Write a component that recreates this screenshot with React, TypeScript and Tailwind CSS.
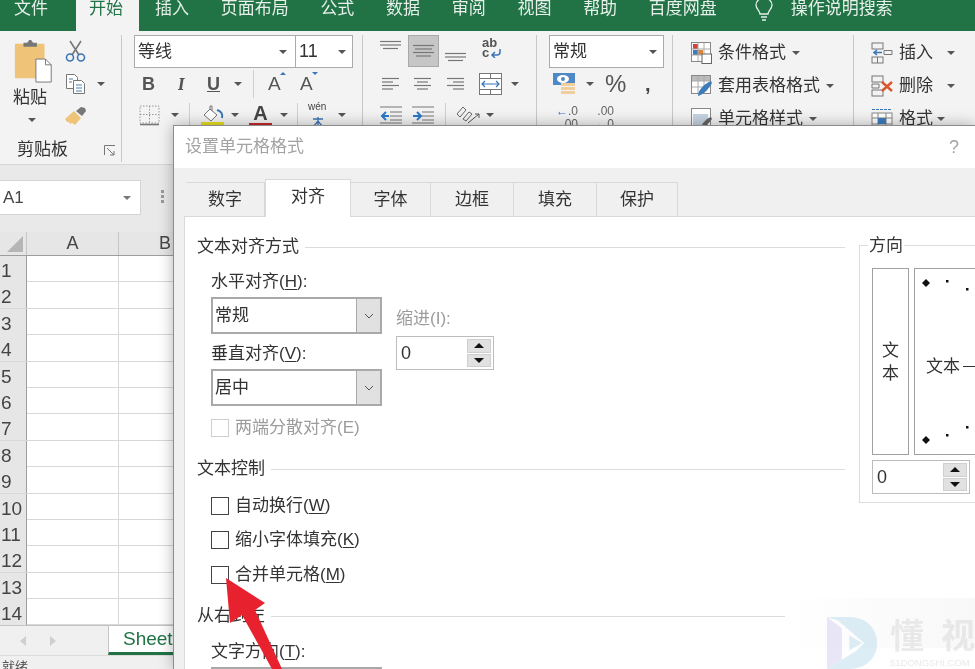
import React from 'react';

const cjk = "font-['Liberation_Sans','Noto_Sans_CJK_SC',sans-serif]";

const Caret = ({ className = '' }: { className?: string }) => (
  <span className={`inline-block w-0 h-0 border-x-[4px] border-x-transparent border-t-[4px] border-t-[#555] ${className}`} />
);

const Sep = ({ className = 'h-[24px]' }: { className?: string }) => <span className={`w-px bg-[#d0d0d0] ${className}`} />;

const Lines = ({ w, rows, gap = 3.5 }: { w: number; rows: [number, number][]; gap?: number }) => (
  <svg width={w} height="14" viewBox={`0 0 ${w} 14`}>
    {rows.map(([a, b], i) => (
      <line key={i} x1={a} x2={b} y1={1.5 + i * gap} y2={1.5 + i * gap} stroke="#777" strokeWidth="1.2" />
    ))}
  </svg>
);

const PasteIcon = () => (
  <svg width="40" height="44" viewBox="0 0 40 46">
    <rect x="0" y="5" width="31" height="36" rx="1" fill="#efc478" />
    <path d="M9 8V4h4l2-3h2l2 3h4v4z" fill="#777" />
    <path d="M22 21h10l6 6v18H22z" fill="#fff" stroke="#777" />
    <path d="M32 21v6h6" fill="none" stroke="#777" />
  </svg>
);

const ScissorsIcon = () => (
  <svg width="21" height="22" viewBox="0 0 21 22" fill="none">
    <path d="M5 1l9 14M16 1L7 15" stroke="#777" strokeWidth="1.6" />
    <circle cx="5" cy="17.5" r="3.5" stroke="#3a76b5" strokeWidth="1.6" />
    <circle cx="16" cy="17.5" r="3.5" stroke="#3a76b5" strokeWidth="1.6" />
  </svg>
);

const CopyIcon = () => (
  <svg width="21" height="22" viewBox="0 0 21 22" fill="#fff" stroke="#777">
    <path d="M1.5 1.5h8l3 3v11h-11z" />
    <path d="M8.5 7.5h8l3 3v10h-11z" />
    <path d="M11 12h6M11 15h6M11 18h6M4 6h4M4 9h3" stroke="#4c7fb3" />
  </svg>
);

const BrushIcon = () => (
  <svg width="22" height="20" viewBox="0 0 22 20">
    <path d="M0 13l9-8 7 7-6 7-3-2-2 1-1-2-2 0z" fill="#efc478" />
    <path d="M11 5l5-4 4 1 1 3-4 5z" fill="#777" />
  </svg>
);

const BorderIcon = () => (
  <svg width="21" height="21" viewBox="0 0 21 21" fill="none">
    <rect x="1" y="1" width="19" height="17" stroke="#999" strokeDasharray="1.5 1.5" />
    <path d="M10.5 1v17M1 9.5h19" stroke="#999" strokeDasharray="1.5 1.5" />
    <path d="M1 19.5h19" stroke="#777" strokeWidth="1.6" />
  </svg>
);

const FillIcon = () => (
  <svg width="24" height="22" viewBox="0 0 24 22" fill="none">
    <path d="M9 5l7 6-6 6-7-6z" fill="#fff" stroke="#777" />
    <path d="M9 6V2h2v5" stroke="#777" />
    <path d="M16 6c4 1 6 4 5 8" stroke="#3a76b5" strokeWidth="2" />
    <rect x="0" y="18" width="23" height="3" fill="#e8e020" />
  </svg>
);

const WenIcon = () => (
  <svg width="20" height="22" viewBox="0 0 20 22" fill="none">
    <path d="M10 13v9M5 15h10M6 22l4-5 4 5" stroke="#3a76b5" strokeWidth="1.3" />
  </svg>
);

const AlignTop = ({ active }: { active?: boolean }) => (
  <span className={`w-[31px] h-[32px] flex items-center justify-center ${active ? 'bg-[#c6c6c6] border border-[#a8a8a8]' : ''}`}>
    <Lines w={21} rows={active ? [[0, 21], [2, 19], [0, 21], [3, 18]] : [[0, 21], [0, 21], [3, 18]]} />
  </span>
);

const ReturnArrow = () => (
  <svg width="12" height="9" viewBox="0 0 12 9" fill="none">
    <path d="M10 0v3c0 2-1 3-3 3H2M5 3L2 6l3 3" stroke="#3a76b5" strokeWidth="1.5" />
  </svg>
);

const MergeIcon = () => (
  <svg width="23" height="22" viewBox="0 0 23 22" fill="none" stroke="#777">
    <rect x=".5" y=".5" width="22" height="21" fill="#fff" />
    <path d="M1 5.500h21M1 16.500h21M11.500 1v4.500M11.500 16.500V21" />
    <path d="M3 11h17M6 8l-3 3 3 3M17 8l3 3-3 3" stroke="#3a76b5" strokeWidth="1.2" />
  </svg>
);

const IndentIcon = ({ flip }: { flip?: boolean }) => (
  <svg width="22" height="18" viewBox="0 0 22 18" fill="none">
    <path d="M0 1h22M10 6h12M10 10h12M10 14h12M0 17h22" stroke="#777" />
    <path d={flip ? 'M1 10h7M5 6l4 4-4 4' : 'M9 10H2M6 6l-4 4 4 4'} stroke="#2a78c8" strokeWidth="2" />
  </svg>
);

const OrientIcon = () => (
  <svg width="24" height="18" viewBox="0 0 24 18" fill="none" stroke="#666">
    <path d="M1 8l6-7 3 3-6 7zM7 13l6-7 3 2-6 7z" />
    <path d="M12 17l11-9M23 8h-4M23 8v4" stroke="#555" />
  </svg>
);

const MoneyIcon = () => (
  <svg width="24" height="24" viewBox="0 0 24 24">
    <rect x="0" y="1" width="22" height="12" fill="#4f88c6" />
    <ellipse cx="10" cy="7" rx="6" ry="4" fill="#fff" />
    <circle cx="10" cy="7" r="2" fill="#4f88c6" />
    <rect x="8" y="11" width="14" height="3" fill="#f0cf9c" />
    <rect x="8" y="15" width="14" height="3" fill="#f0cf9c" />
    <rect x="8" y="19" width="14" height="3" fill="#f0cf9c" />
  </svg>
);

const CondIcon = () => (
  <svg width="21" height="22" viewBox="0 0 21 22">
    <rect x=".5" y=".5" width="19" height="19" fill="#fff" stroke="#888" />
    <rect x="2" y="2" width="5" height="5" fill="#d0453a" />
    <rect x="2" y="8" width="5" height="5" fill="#3d7cbc" />
    <rect x="7" y="8" width="5" height="5" fill="#d9863a" />
    <path d="M7 1v18M13 1v18M1 7h18M1 13h18" stroke="#aaa" />
    <rect x="11" y="12" width="9.500" height="9.500" fill="#fff" stroke="#666" />
  </svg>
);

const TableIcon = () => (
  <svg width="21" height="22" viewBox="0 0 21 22">
    <rect x=".5" y=".5" width="19" height="18" fill="#fff" stroke="#888" />
    <rect x="1" y="1" width="18" height="5" fill="#bbb" />
    <path d="M7 1v17M13 1v17M1 6h18M1 12h18" stroke="#aaa" />
    <path d="M7 21c0-6 6-12 13-15l1 2c-3 5-7 11-14 13z" fill="#3d7cbc" />
  </svg>
);

const CellStyleIcon = () => (
  <svg width="21" height="22" viewBox="0 0 21 22">
    <rect x=".5" y=".5" width="19" height="18" fill="#fff" stroke="#888" />
    <rect x="2" y="6" width="15" height="11" fill="#c6d3e2" />
    <path d="M10 20c1-5 5-9 10-11l1 2c-3 4-6 8-11 9z" fill="#666" />
  </svg>
);

const InsertIcon = () => (
  <svg width="22" height="22" viewBox="0 0 22 22" fill="none" stroke="#777">
    <rect x="1" y="1" width="11" height="6" />
    <rect x="1" y="15" width="11" height="6" />
    <path d="M6.500 15v6M13 8.500h8v4h-8z" />
    <path d="M11 10.500H3M6 8l-3 2.500L6 13" stroke="#3a76b5" strokeWidth="1.6" />
  </svg>
);

const DeleteIcon = () => (
  <svg width="22" height="22" viewBox="0 0 22 22" fill="none" stroke="#777">
    <rect x="1" y="1" width="11" height="6" />
    <rect x="1" y="15" width="11" height="6" />
    <path d="M1 9h7v4H1z" />
    <path d="M11 7l10 9M21 7L11 16" stroke="#d9562f" strokeWidth="2.4" />
  </svg>
);

const FormatIcon = () => (
  <svg width="22" height="22" viewBox="0 0 22 22" fill="none" stroke="#888">
    <rect x="1" y="5" width="20" height="16" fill="#fff" />
    <path d="M7 5v16M15 5v16M1 10h20M1 16h20" />
    <rect x="7" y="10" width="8" height="6" fill="#3d7cbc" stroke="none" />
    <path d="M1 1.500h20" stroke="#3a76b5" strokeDasharray="3 1" />
  </svg>
);

const BulbIcon = () => (
  <svg width="20" height="24" viewBox="0 0 20 24" fill="none" stroke="#e6efe9" strokeWidth="1.3">
    <path d="M6 16c0-3-4-5-4-9a8 7 0 0 1 16 0c0 4-4 6-4 9z" />
    <path d="M7 19h6M8 22h4" />
  </svg>
);

const Arrow = () => (
  <svg className="absolute left-[220px] top-[570px] w-[80px] h-[99px]" viewBox="0 0 80 99">
    <path d="M6 8l39 25-10 7 27 59H52L22 45 10 53z" fill="#e8212f" />
  </svg>
);

const Watermark = () => (
  <>
    <div className="absolute right-0 top-[598px] w-[190px] h-[50px] bg-linear-to-l from-[#f8f8f8] to-white" />
    <div className="absolute right-0 bottom-0 w-[150px] h-[52px] flex items-start gap-[9px] opacity-40">
      <svg className="shrink-0" width="56" height="52" viewBox="0 0 56 56">
        <path d="M0 0h24c18 0 30 12 30 28S42 56 24 56H0l32-20 8-8L12 4z" fill="#a9d4ea" />
        <path d="M0 0v56l16-10V12z" fill="#c9c3ec" />
        <path d="M24 20l14 8-14 8z" fill="#a9d4ea" />
      </svg>
      <div className="flex flex-col flex-1 min-w-0">
        <div className={`flex justify-between text-[34px] leading-[38px] font-bold text-[#cfcfcf] ${cjk}`}>
          <span>懂</span>
          <span>视</span>
        </div>
        <span className="font-['Liberation_Sans',sans-serif] mt-[3px] text-[9.5px] text-[#c9c9c9] leading-[10px] whitespace-nowrap">51DONGSHI.COM</span>
      </div>
    </div>
  </>
);

const Legend = ({ label, className = '' }: { label: string; className?: string }) => (
  <div className={`flex items-center h-[24px] gap-[6px] ${className}`}>
    <span>{label}</span>
    <span className="flex-1 h-px bg-[#dcdcdc]" />
  </div>
);

const Hotkey = ({ before, k, after = '' }: { before: string; k: string; after?: string }) => (
  <>
    {before}(<span className="underline underline-offset-2">{k}</span>){after}
  </>
);

const Select = ({ value }: { value: string }) => (
  <div className="flex items-stretch w-[171px] h-[37px] border-2 border-[#a9a9a9] bg-white">
    <span className="flex-1 pl-[2px] flex items-center">{value}</span>
    <span className="w-[24px] bg-[#e1e1e1] border-l border-[#a9a9a9] flex items-center justify-center">
      <svg width="10" height="6" viewBox="0 0 10 6" fill="none">
        <path d="M1 1l4 4 4-4" stroke="#555" />
      </svg>
    </span>
  </div>
);

const Spinner = () => (
  <div className="flex items-stretch w-[98px] h-[34px] border border-[#bcbcbc] bg-white">
    <span className="flex-1 pl-[4px] flex items-center text-[18px]">0</span>
    <span className="w-[24px] flex flex-col gap-px my-[2px] mr-[2px]">
      <span className="flex-1 bg-[#e1e1e1] border border-[#cfcfcf] flex items-center justify-center">
        <span className="w-0 h-0 border-x-[5px] border-x-transparent border-b-[5px] border-b-[#111]" />
      </span>
      <span className="flex-1 bg-[#e1e1e1] border border-[#cfcfcf] flex items-center justify-center">
        <span className="w-0 h-0 border-x-[5px] border-x-transparent border-t-[5px] border-t-[#111]" />
      </span>
    </span>
  </div>
);

const Check = ({ children, disabled, className = '' }: { children: React.ReactNode; disabled?: boolean; className?: string }) => (
  <div className={`flex items-center h-[24px] gap-[6px] ${disabled ? 'text-[#9c9c9c]' : ''} ${className}`}>
    <span className={`w-[18px] h-[18px] bg-white border ${disabled ? 'border-[#cfcfcf]' : 'border-[#444]'}`} />
    <span>{children}</span>
  </div>
);

const RibbonTabs = () => (
  <div className={`flex items-start h-[31px] bg-[#217346] text-[17px] leading-[17px] text-[#e6efe9] shrink-0 ${cjk}`}>
    <span className="ml-[14px] mr-[28px]">文件</span>
    <span className="w-[63px] h-[31px] pl-[13px] bg-[#f3f3f3] text-[#217346] mr-[16px]">开始</span>
    <div className="flex gap-[31.7px]">
      <span>插入</span>
      <span>页面布局</span>
      <span>公式</span>
      <span>数据</span>
      <span>审阅</span>
      <span>视图</span>
      <span>帮助</span>
      <span>百度网盘</span>
    </div>
    <span className="ml-[37px] mr-[17px] -mt-[2px]"><BulbIcon /></span>
    <span>操作说明搜索</span>
  </div>
);

const Ribbon = () => (
  <div className={`flex h-[134px] shrink-0 bg-[#f3f3f3] border-b border-[#d6d6d6] text-[#333] text-[17px] ${cjk}`}>
    {/* clipboard */}
    <div className="w-[122px] h-[127px] mt-[4px] relative shrink-0 border-r border-[#c8c8c8] flex flex-col">
      <div className="flex flex-1">
        <div className="w-[65px] pl-[14px] pt-[4px] flex flex-col">
          <PasteIcon />
          <span className="-ml-[1px] leading-[24px] mt-[3px] whitespace-nowrap">粘贴</span>
          <Caret className="ml-[14px] mt-[8px]" />
        </div>
        <div className="flex flex-col pt-[5px] gap-[11px]">
          <ScissorsIcon />
          <div className="flex items-center gap-[11px]">
            <CopyIcon />
            <Caret />
          </div>
          <BrushIcon />
        </div>
      </div>
      <div className="h-[24px] pl-[17px] pr-[5px] flex items-center justify-between">
        <span>剪贴板</span>
        <svg width="12" height="11" viewBox="0 0 12 11" fill="none" stroke="#777">
          <path d="M.5 10V.5H11M3 3l7 7M6 10h4V6" />
        </svg>
      </div>
    </div>

    {/* font */}
    <div className="w-[241px] h-[127px] mt-[4px] shrink-0 border-r border-[#c8c8c8] pl-[12px] flex flex-col">
      <div className="flex h-[33px]">
        <div className="w-[162px] bg-white border border-[#ababab] flex items-center justify-between pl-[3px] pr-[8px]">
          <span>等线</span>
          <Caret />
        </div>
        <div className="w-[57px] bg-white border border-l-0 border-[#ababab] flex items-center justify-between pl-[3px] pr-[6px]">
          <span className="text-[18px]">11</span>
          <Caret />
        </div>
      </div>
      <div className="flex items-center h-[32px] font-bold text-[#555] text-[18px]">
        <span className="w-[33px] pl-[8px]">B</span>
        <span className="w-[33px] pl-[11px] italic font-serif">I</span>
        <span className="w-[32px] pl-[7px] underline">U</span>
        <Caret className="ml-[2px] mr-[11px]" />
        <Sep className="h-[28px]" />
        <span className="ml-[14px] w-[32px] font-normal text-[19px] relative">
          A<span className="absolute left-[12px] top-[2px] w-0 h-0 border-x-[3px] border-x-transparent border-b-[3px] border-b-[#3a76b5]" />
        </span>
        <span className="font-normal text-[19px] relative">
          A<span className="absolute left-[12px] top-[2px] w-0 h-0 border-x-[3px] border-x-transparent border-t-[3px] border-t-[#3a76b5]" />
        </span>
      </div>
      <div className="flex items-center h-[30px]">
        <span className="ml-[5px] mr-[11px]"><BorderIcon /></span>
        <Caret className="mr-[10px]" />
        <Sep />
        <span className="ml-[11px] mr-[6px]"><FillIcon /></span>
        <Caret className="mr-[10px]" />
        <span className="w-[23px] mr-[8px] flex flex-col items-center text-[#444] text-[20px] leading-[19px] font-bold">
          A<span className="w-[23px] h-[3px] bg-[#c62828]" />
        </span>
        <Caret className="mr-[9px]" />
        <Sep />
        <span className="ml-[10px] mr-[10px] relative">
          <WenIcon />
          <span className="absolute left-0 top-[-3px] text-[10px] leading-[12px] text-[#444] whitespace-nowrap">wén</span>
        </span>
        <Caret />
      </div>
    </div>

    {/* alignment */}
    <div className="w-[174px] h-[127px] mt-[4px] shrink-0 border-r border-[#c8c8c8] pl-[12px] flex flex-col">
      <div className="flex items-start h-[33px] gap-[1px]">
        <span className="-mt-[4px]"><AlignTop /></span>
        <span className="ml-[1px]"><AlignTop active /></span>
        <span className="mt-[8px]"><AlignTop /></span>
        <span className="ml-[10px] mt-[3px] flex flex-col text-[13px] font-bold leading-[10px] text-[#555]">
          <span>ab</span>
          <span className="flex items-end gap-[1px]">c<ReturnArrow /></span>
        </span>
      </div>
      <div className="flex items-center h-[32px] pl-[7px]">
        <span className="w-[17px]"><Lines w={17} rows={[[0, 17], [0, 11], [0, 17], [0, 11]]} /></span>
        <span className="ml-[15px] w-[17px]"><Lines w={17} rows={[[0, 17], [3, 14], [0, 17], [3, 14]]} /></span>
        <span className="ml-[16px] w-[17px]"><Lines w={17} rows={[[0, 17], [6, 17], [0, 17], [6, 17]]} /></span>
        <span className="ml-[15px] mr-[9px]"><MergeIcon /></span>
        <Caret />
      </div>
      <div className="flex items-center h-[30px] pl-[5px]">
        <IndentIcon />
        <span className="ml-[10px] mr-[11px]"><IndentIcon flip /></span>
        <Sep />
        <span className="ml-[10px] mr-[6px]"><OrientIcon /></span>
        <Caret />
      </div>
    </div>

    {/* number */}
    <div className="w-[136px] h-[127px] mt-[4px] shrink-0 border-r border-[#c8c8c8] pl-[12px] flex flex-col">
      <div className="w-[115px] h-[33px] bg-white border border-[#ababab] flex items-center justify-between pl-[3px] pr-[6px]">
        <span>常规</span>
        <Caret />
      </div>
      <div className="flex items-center h-[32px]">
        <span className="ml-[4px] mr-[9px]"><MoneyIcon /></span>
        <Caret className="mr-[11px]" />
        <span className="text-[24px] text-[#555] font-normal w-[32px]">%</span>
        <span className="text-[20px] text-[#444] font-bold ml-[8px]">,</span>
      </div>
      <div className="flex items-start h-[30px] pt-[5px] gap-[14px] pl-[7px] text-[12px] leading-[13px] text-[#666]">
        <span className="flex flex-col items-end"><span><span className="text-[#2a78c8] font-bold">←</span>.0</span><span>.00</span></span>
        <span className="flex flex-col items-end"><span>.00</span><span><span className="text-[#2a78c8] font-bold">→</span>.0</span></span>
      </div>
    </div>

    {/* styles */}
    <div className="w-[181px] h-[127px] mt-[4px] shrink-0 border-r border-[#c8c8c8] pl-[18px] flex flex-col">
      <div className="flex items-center h-[33px] gap-[6px] mt-[1px]"><CondIcon /><span>条件格式</span><Caret /></div>
      <div className="flex items-center h-[33px] gap-[6px]"><TableIcon /><span>套用表格格式</span><Caret /></div>
      <div className="flex items-center h-[33px] gap-[6px]"><CellStyleIcon /><span>单元格样式</span><Caret /></div>
    </div>

    {/* cells */}
    <div className="flex-1 h-[127px] mt-[4px] pl-[17px] flex flex-col">
      <div className="flex items-center h-[33px] mt-[1px]"><InsertIcon /><span className="ml-[6px] mr-[14px]">插入</span><Caret /></div>
      <div className="flex items-center h-[33px]"><DeleteIcon /><span className="ml-[6px] mr-[14px]">删除</span><Caret /></div>
      <div className="flex items-center h-[33px]"><FormatIcon /><span className="ml-[6px] mr-[4px]">格式</span><Caret /></div>
    </div>
  </div>
);

const Sheet = () => {
  const rows = Array.from({ length: 14 }, (_, i) => i + 1);
  return (
    <div className="flex flex-col flex-1 min-h-0 font-['Liberation_Sans','Noto_Sans_CJK_SC',sans-serif] text-[#444]">
      <div className="h-[67px] shrink-0 bg-[#e9e9e9] pt-[15px] flex items-start">
        <div className="w-[141px] h-[35px] bg-white border border-[#d4d4d4] border-l-0 flex items-center justify-between pl-[3px] pr-[9px] text-[17px]">
          <span>A1</span>
          <Caret className="border-t-[#777]" />
        </div>
        <div className="ml-[20px] mt-[10px] flex flex-col gap-[2px]">
          <span className="w-[3px] h-[3px] bg-[#999]" />
          <span className="w-[3px] h-[3px] bg-[#999]" />
          <span className="w-[3px] h-[3px] bg-[#999]" />
        </div>
      </div>
      <div className="flex h-[24px] shrink-0 bg-[#e6e6e6] border-b border-[#9e9e9e] text-[18px]">
        <div className="w-[27px] border-r border-[#c6c6c6] flex items-end justify-end pr-[3px] pb-[3px]">
          <span className="w-0 h-0 border-l-[16px] border-l-transparent border-b-[16px] border-b-[#b5b5b5]" />
        </div>
        <div className="w-[92px] border-r border-[#c6c6c6] flex items-center justify-center">A</div>
        <div className="w-[92px] flex items-center justify-center">B</div>
      </div>
      {rows.map((n) => (
        <div key={n} className="flex h-[26.4px] shrink-0 bg-white border-b border-[#d8d8d8]">
          <div className="w-[27px] bg-[#e6e6e6] border-r border-[#9e9e9e] text-[19px] leading-[30px] h-[26px] overflow-hidden pl-[1px]">{n}</div>
          <div className="w-[92px] border-r border-[#d8d8d8]" />
        </div>
      ))}
      <div className="flex h-[30px] shrink-0 bg-[#f0f0f0] border-t border-[#c4c4c4]">
        <div className="w-[108px] flex items-center gap-[24px] pl-[20px]">
          <span className="w-0 h-0 border-y-[5px] border-y-transparent border-r-[6px] border-r-[#cfcfcf]" />
          <span className="w-0 h-0 border-y-[5px] border-y-transparent border-l-[6px] border-l-[#cfcfcf]" />
        </div>
        <div className="w-[80px] bg-white border-l border-[#c4c4c4] border-b-[3px] border-b-[#217346] text-[#217346] text-[19px] pl-[14px] leading-[26px]">Sheet1</div>
      </div>
      <div className="flex-1 bg-[#f0f0f0] border-t border-[#dcdcdc] pl-[2px] pt-[4px] text-[13px] leading-[14px] text-[#555]">就绪</div>
    </div>
  );
};

const TABS = ['数字', '对齐', '字体', '边框', '填充', '保护'];
const TAB_WIDTHS = ['w-[79px]', 'w-[86px]', 'w-[80px]', 'w-[83px]', 'w-[83px]', 'w-[81px]'];

const Dialog = () => (
  <div className={`absolute left-[173px] top-[125px] right-0 bottom-0 flex flex-col bg-[#f0f0f0] border-l border-t border-[#8c8c8c] shadow-[0_0_14px_rgba(0,0,0,0.3)] text-[17px] text-[#333] ${cjk}`}>
    <div className="h-[42px] shrink-0 bg-white flex items-center justify-between pl-[11px] pr-[16px] text-[#a3a3a3]">
      <span>设置单元格格式</span>
      <span className="font-['Liberation_Sans',sans-serif] text-[18px]">?</span>
    </div>
    <div className="flex items-end h-[48px] shrink-0 pl-[12px] relative z-10">
      {TABS.map((t, i) => (
        <span
          key={t}
          className={`${TAB_WIDTHS[i]} flex items-center justify-center ${
            i === 1
              ? 'h-[38px] bg-white border border-b-0 border-[#d9d9d9] -mb-px pb-[4px]'
              : 'h-[34px] border-t border-r border-[#d9d9d9]'
          }`}
        >
          {t}
        </span>
      ))}
    </div>
    <div className="flex-1 ml-[10px] bg-white border-l border-t border-[#d9d9d9] pl-[12px] flex gap-[14px] min-h-0 overflow-hidden">
      <div className="w-[648px] shrink-0 flex flex-col pt-[18px]">
        <Legend label="文本对齐方式" />
        <div className="flex mt-[11px] pl-[14px]">
          <div className="w-[185px] flex flex-col">
            <span className="h-[24px] leading-[24px]"><Hotkey before="水平对齐" k="H" after=":" /></span>
            <div className="mt-[3px]"><Select value="常规" /></div>
            <span className="h-[24px] leading-[24px] mt-[8px]"><Hotkey before="垂直对齐" k="V" after=":" /></span>
            <div className="mt-[3px]"><Select value="居中" /></div>
          </div>
          <div className="flex flex-col mt-[37px]">
            <span className="h-[24px] leading-[24px] text-[#9c9c9c]">缩进(I):</span>
            <div className="mt-[5px]"><Spinner /></div>
          </div>
        </div>
        <Check disabled className="ml-[14px] mt-[10px]">两端分散对齐(E)</Check>
        <Legend label="文本控制" className="mt-[17px]" />
        <Check className="ml-[14px] mt-[13px]"><Hotkey before="自动换行" k="W" /></Check>
        <Check className="ml-[14px] mt-[10px]"><Hotkey before="缩小字体填充" k="K" /></Check>
        <Check className="ml-[14px] mt-[11px]"><Hotkey before="合并单元格" k="M" /></Check>
        <Legend label="从右到左" className="mt-[17px]" />
        <span className="h-[24px] leading-[24px] mt-[12px] ml-[14px]"><Hotkey before="文字方向" k="T" after=":" /></span>
        <div className="ml-[14px] mt-[3px]"><Select value="" /></div>
      </div>
      <div className="flex-1 min-w-0 mt-[28px] self-start relative border border-r-0 border-[#dcdcdc] pl-[12px] pt-[22px] pb-[8px]">
        <span className="absolute left-[8px] -top-[12px] bg-white px-px leading-[24px]">方向</span>
        <div className="flex gap-[5px] h-[187px]">
          <div className="w-[37px] shrink-0 border border-[#a0a0a0] flex flex-col items-center justify-center leading-[23px]">
            <span>文</span>
            <span>本</span>
          </div>
          <div className="flex-1 min-w-[80px] -mr-[20px] border border-[#a0a0a0] relative flex items-center pl-[11px] pt-[10px]">
            <span className="whitespace-nowrap">文本</span>
            <span className="w-[20px] h-px bg-[#333] ml-[3px]" />
            <svg className="absolute left-[6px] top-[10px]" width="60" height="165" viewBox="0 0 60 165" fill="#111">
              <path d="M5 0l4 4-4 4-4-4z" />
              <path d="M5 157l4 4-4 4-4-4z" />
              <rect x="25" y="1" width="2.500" height="2.500" />
              <rect x="45" y="9" width="2.500" height="2.500" />
              <rect x="45" y="147" width="2.500" height="2.500" />
              <rect x="25" y="155" width="2.500" height="2.500" />
            </svg>
          </div>
        </div>
        <div className="mt-[5px]"><Spinner /></div>
      </div>
    </div>
  </div>
);

export default function App() {
  return (
    <div className="relative w-[975px] h-[669px] overflow-hidden flex flex-col bg-[#f3f3f3] blur-[0.4px]">
      <RibbonTabs />
      <Ribbon />
      <Sheet />
      <Dialog />
      <Arrow />
      <Watermark />
    </div>
  );
}
